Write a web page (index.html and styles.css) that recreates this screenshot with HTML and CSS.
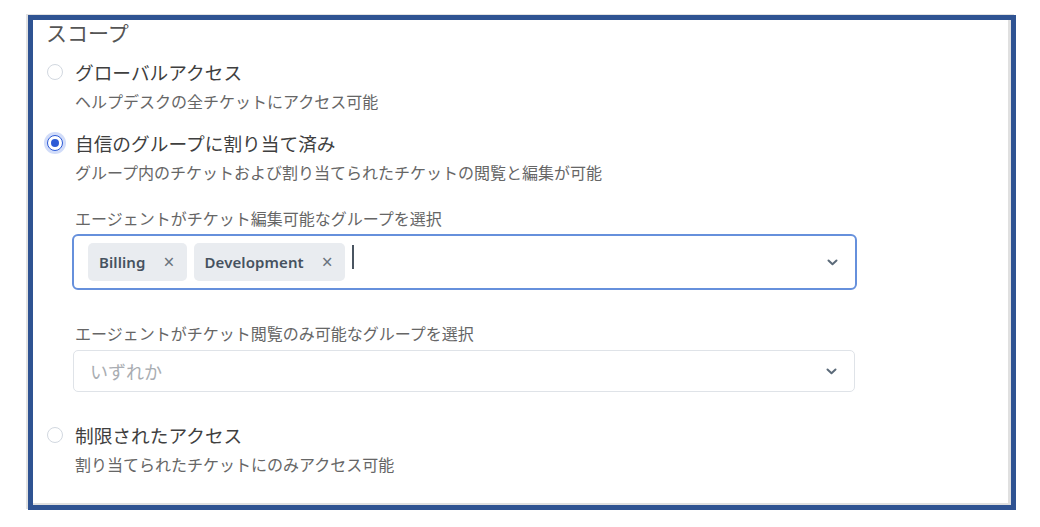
FILE: index.html
```html
<!DOCTYPE html>
<html lang="ja">
<head>
    <meta charset="UTF-8">
    <title>スコープ</title>
    <link rel="stylesheet" href="styles.css">
</head>
<body>
    <div class="frame">
        <h2 class="title">スコープ</h2>

        <div class="option">
            <div class="option-row">
                <span class="radio"></span>
                <span class="option-label">グローバルアクセス</span>
            </div>
            <p class="option-desc">ヘルプデスクの全チケットにアクセス可能</p>
        </div>

        <div class="option option-2">
            <div class="option-row">
                <span class="radio checked"></span>
                <span class="option-label">自信のグループに割り当て済み</span>
            </div>
            <p class="option-desc">グループ内のチケットおよび割り当てられたチケットの閲覧と編集が可能</p>

            <div class="field">
                <label class="field-label">エージェントがチケット編集可能なグループを選択</label>
                <div class="multi-select">
                    <span class="tag">Billing <span class="tag-x">×</span></span>
                    <span class="tag">Development <span class="tag-x">×</span></span>
                    <span class="caret"></span>
                    <svg class="chevron" width="11" height="7" viewBox="0 0 11 7"><path d="M1.5 1.5 L5.5 5.2 L9.5 1.5" fill="none" stroke="#5b6a79" stroke-width="2" stroke-linecap="round" stroke-linejoin="round"/></svg>
                </div>
            </div>

            <div class="field field-2">
                <label class="field-label">エージェントがチケット閲覧のみ可能なグループを選択</label>
                <div class="select">
                    <span class="placeholder">いずれか</span>
                    <svg class="chevron" width="11" height="7" viewBox="0 0 11 7"><path d="M1.5 1.5 L5.5 5.2 L9.5 1.5" fill="none" stroke="#5b6a79" stroke-width="2" stroke-linecap="round" stroke-linejoin="round"/></svg>
                </div>
            </div>
        </div>

        <div class="option option-3">
            <div class="option-row">
                <span class="radio"></span>
                <span class="option-label">制限されたアクセス</span>
            </div>
            <p class="option-desc">割り当てられたチケットにのみアクセス可能</p>
        </div>
    </div>
</body>
</html>
```

FILE: styles.css
```css
* {
    margin: 0;
    padding: 0;
    box-sizing: border-box;
}

body {
    background: #ffffff;
    font-family: "Noto Sans CJK JP", "Noto Sans", sans-serif;
    padding: 15px 0 0 28px;
}

.frame {
    width: 988px;
    height: 495px;
    border: 5px solid #2f5392;
    box-shadow: -2px -1px 0 #e2e2e2, inset -3px -2px 0 #e0e0e0;
    background: #fff;
    overflow: hidden;
}

.title {
    font-size: 21px;
    font-weight: 400;
    line-height: 24px;
    color: #555;
    padding-left: 13px;
}

.option {
    margin-top: 15px;
}

.option-2 {
    margin-top: 18px;
}

.option-3 {
    margin-top: 30px;
}

.option-row {
    display: flex;
    align-items: center;
    height: 26px;
}

.radio {
    width: 16px;
    height: 16px;
    border-radius: 50%;
    border: 1.5px solid #d2d8e0;
    margin-left: 14px;
    margin-right: 12px;
    background: #fff;
    position: relative;
}

.radio.checked {
    border: 1.5px solid #2c5ad6;
    box-shadow: 0 0 0 3px rgba(70, 115, 230, 0.25);
}

.radio.checked::after {
    content: "";
    position: absolute;
    left: 2.5px;
    top: 2.5px;
    width: 8px;
    height: 8px;
    border-radius: 50%;
    background: #2c5ad6;
}

.option-label {
    font-size: 18.7px;
    color: #3f3f3f;
    line-height: 26px;
}

.option-desc {
    font-size: 16px;
    line-height: 22px;
    color: #666;
    margin-top: 5px;
    padding-left: 42px;
}

.field {
    padding-left: 42px;
    margin-top: 24px;
}

.field-2 {
    margin-top: 32px;
}

.field-label {
    display: block;
    font-size: 16px;
    line-height: 22px;
    color: #666;
}

.multi-select {
    display: flex;
    align-items: center;
    gap: 7px;
    width: 785px;
    height: 56px;
    margin: 5px 0 0 -3px;
    padding: 0 17px 0 14px;
    border: 2px solid #6690dc;
    border-radius: 6px;
}

.tag {
    display: flex;
    align-items: center;
    height: 38px;
    padding: 0 12px 0 11px;
    background: #e9ecf0;
    border-radius: 5px;
    font-family: "Noto Sans", sans-serif;
    font-size: 15px;
    font-weight: 600;
    color: #46525f;
    letter-spacing: 0.1px;
}

.tag-x {
    font-weight: 400;
    font-size: 19px;
    color: #6a737d;
    margin-left: 18px;
}

.caret {
    width: 2px;
    height: 24px;
    background: #4a5561;
    margin-top: -10px;
}

.chevron {
    margin-left: auto;
}

.select {
    display: flex;
    align-items: center;
    width: 782px;
    height: 42px;
    margin: 6px 0 0 -2px;
    padding: 0 17px 0 16px;
    border: 1px solid #dfe3e8;
    border-radius: 5px;
}

.placeholder {
    font-size: 18px;
    color: #a9adb2;
}
```
